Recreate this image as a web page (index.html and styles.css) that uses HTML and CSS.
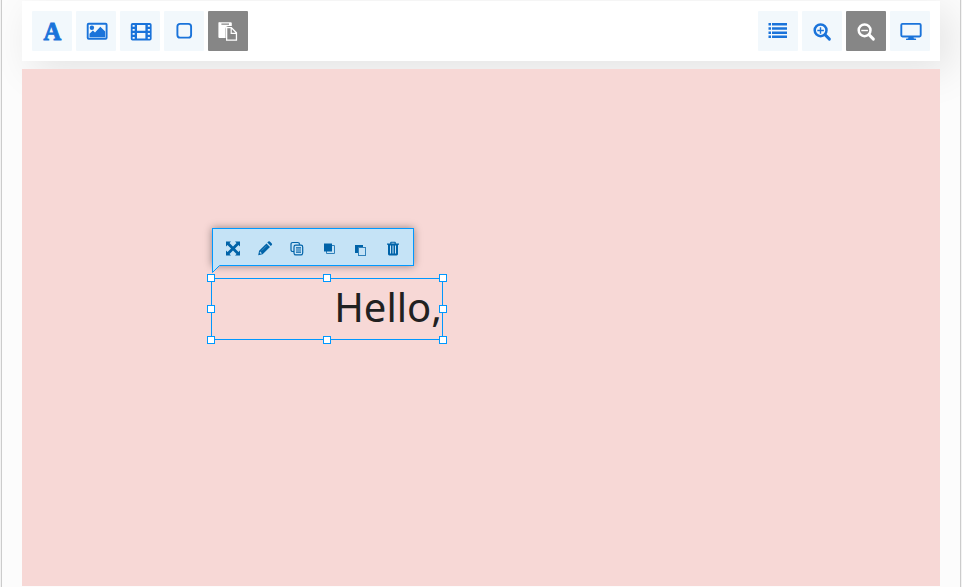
FILE: index.html
```
<!DOCTYPE html>
<html lang="en">
<head>
<meta charset="utf-8">
<title>Slide editor</title>
<link rel="stylesheet" href="styles.css">
</head>
<body>
<main class="editor">
  <header class="toolbar">
    <div class="group">
      <button class="tool" aria-label="Text"><svg viewBox="0 0 40 40"><text class="letter" x="20.4" y="28.700">A</text></svg></button>
      <button class="tool" aria-label="Image"><svg viewBox="0 0 40 40"><rect class="line" x="11.700" y="12.700" width="18.900" height="15" rx="1"/><circle cx="15.900" cy="16.700" r="2.200"/><path d="M13.500 26.200v-3.400l3.400-3.300 2.100 1.900 5.300-5.600 4.900 4.700v5.700z"/></svg></button>
      <button class="tool" aria-label="Video"><svg viewBox="0 0 40 40"><path fill-rule="evenodd" d="M12.500 12h17.300q1.800 0 1.800 1.700v14q0 1.800-1.800 1.800H12.500q-1.700 0-1.700-1.800v-14q0-1.700 1.700-1.700zM17 14v5.700h8.400V14zM17 21.900v5.700h8.400v-5.700zM12.600 14v1.700h2.100V14zM12.600 18v1.700h2.100V18zM12.600 22v1.700h2.100V22zM12.600 26v1.700h2.100V26zM27.800 14v1.700h2.100V14zM27.800 18v1.700h2.100V18zM27.800 22v1.700h2.100V22zM27.800 26v1.700h2.100V26z"/></svg></button>
      <button class="tool" aria-label="Shape"><svg viewBox="0 0 40 40"><rect class="line" x="13.400" y="12.900" width="13.700" height="13.700" rx="2.700"/></svg></button>
      <button class="tool off" aria-label="Paste"><svg viewBox="0 0 40 40"><path fill-rule="evenodd" d="M11.400 11.200h11.400q1 0 1 1v2.900h-3q-3.200 0-3.200 3v8.900h-6.200q-1 0-1-1v-14q0-1 1-1zM13.400 12.500v1.200h7.600v-1.200z"/><path fill-rule="evenodd" d="M18 16h5.600l5.500 5.500v8.300H18zM19.300 17.300v11.200h8.500v-5.400h-5.200v-5.800zM23.800 18v3.700h3.600z"/></svg></button>
    </div>
    <div class="group">
      <button class="tool" aria-label="List"><svg viewBox="0 0 40 40"><path d="M10.500 12h2.500v2.500h-2.500zM14 12h15v2.500H14zM10.500 16.200h2.500v2.500h-2.500zM14 16.200h15v2.500H14zM10.500 20.400h2.500v2.500h-2.500zM14 20.400h15v2.500H14zM10.500 24.600h2.500v2.500h-2.500zM14 24.600h15v2.500H14z"/></svg></button>
      <button class="tool" aria-label="Zoom in"><svg viewBox="0 0 40 40"><circle class="lens" cx="18.600" cy="19.300" r="5.900"/><path class="grip" d="M23.200 23.900l4.200 4.200"/><path class="sign" d="M15.300 19.500h6.600M18.500 16.200v6.600"/></svg></button>
      <button class="tool off" aria-label="Zoom out"><svg viewBox="0 0 40 40"><circle class="lens" cx="18.600" cy="19.300" r="5.900"/><path class="grip" d="M23.200 23.900l4.200 4.200"/><path class="sign" d="M15.300 19.500h6.600"/></svg></button>
      <button class="tool" aria-label="Present"><svg viewBox="0 0 40 40"><rect class="line" x="11.300" y="12.900" width="19.400" height="12.600" rx="1.200"/><path d="M18.500 26h5l.4 1.600h1.400q.8 0 .8.700v.6H16v-.6q0-.7.800-.7h1.300z"/></svg></button>
    </div>
  </header>
  <section class="canvas">
    <div class="selection">
      <p class="text">Hello,</p>
      <i class="handle top left"></i><i class="handle top mid"></i><i class="handle top right"></i>
      <i class="handle center left"></i><i class="handle center right"></i>
      <i class="handle bottom left"></i><i class="handle bottom mid"></i><i class="handle bottom right"></i>
      <div class="popup">
        <svg class="pointer" viewBox="0 0 9 9"><path class="fill" d="M.5 0v7.500L7.500 .5V0z"/><path class="edge" d="M.5 0v7.500L7.500 .5"/></svg>
        <svg class="action" viewBox="0 0 16 16"><path d="M1 1.500h5L4.500 3 8 6.500 11.500 3 10 1.500h5v5L13.500 5 10 8.500l3.500 3.500 1.500-1.500v5h-5l1.500-1.500L8 10.500 4.500 14 6 15.500H1v-5L2.500 12 6 8.500 2.500 5 1 6.500z"/></svg>
        <svg class="action" viewBox="0 0 16 16"><path fill-rule="evenodd" d="M1.200 15.200l.9-4.400 7.400-7.400 3.500 3.500-7.400 7.400zM2.900 11.700l-.2 1.200.8.800 1.200-.2v-.8h-.9v-1zM10.300 2.600l1-1q.8-.7 1.600 0l1.900 1.900q.7.800 0 1.600l-1 1z"/><path class="glint" d="M4.700 10.600l5-5"/></svg>
        <svg class="action" viewBox="0 0 16 16"><path class="thin" d="M5 11.500H3.800q-1.800 0-1.800-1.800V4.300q0-1.800 1.800-1.800h4.900q1.800 0 1.800 1.800v.5"/><rect class="thin" x="5" y="5.200" width="8.700" height="9.700" rx="1.800"/><path class="thin" d="M7 7.800h5M7 10h5M7 12.200h5"/></svg>
        <svg class="action" viewBox="0 0 16 16"><path class="soft" d="M11 5.500h2.500v8h-8V11"/><path d="M3 3.500h8v8H3z"/></svg>
        <svg class="action" viewBox="0 0 16 16"><path d="M2 5h8v2.300H5V13H2z"/><rect class="soft" x="5.500" y="7.500" width="7" height="8"/></svg>
        <svg class="action" viewBox="0 0 16 16"><path fill-rule="evenodd" d="M5.200 3.500v-1q0-.8.900-.8h3.900q.8 0 .8.800v1H14v1.200h-1V14q0 1.400-1.300 1.400H4.300Q3 15.400 3 14V4.700H2V3.500zM6.400 3.500h3.200v-.8H6.400zM5 5.500v8h1v-8zM7.500 5.500v8h1v-8zM10 5.500v8h1v-8z"/></svg>
      </div>
    </div>
  </section>
</main>
</body>
</html>
```
FILE: styles.css
```
* { box-sizing: border-box; }
body {
  margin: 0;
  height: 587px;
  overflow: hidden;
  background: #f3f3f3;
}
.editor {
  display: flex;
  flex-direction: column;
  gap: 8px;
  height: 587px;
  margin: 0 1px;
  padding: 1px 20px;
  overflow: hidden;
  border: solid #ccc;
  border-width: 0 1px;
  background: #fcfcfc;
}
.toolbar {
  display: flex;
  justify-content: space-between;
  flex: none;
  height: 60px;
  padding: 10px;
  background: #fff;
  box-shadow: 10px 10px 40px rgba(0, 0, 0, .1);
}
.group { display: flex; gap: 4px; }
.tool {
  width: 40px;
  height: 40px;
  padding: 0;
  border: 0;
  border-radius: 1px;
  background: #f2f8fc;
  color: #1a73da;
}
.tool.off { background: #868686; color: #fff; }
.tool svg { display: block; fill: currentColor; }
.tool .line { fill: none; stroke: currentColor; stroke-width: 1.900; }
.letter {
  font: bold 24.500px "Liberation Serif", serif;
  text-anchor: middle;
  stroke: currentColor;
  stroke-width: .9;
}
.tool .lens { fill: none; stroke: currentColor; stroke-width: 2.500; }
.grip { stroke: currentColor; stroke-width: 2.900; stroke-linecap: round; }
.sign { stroke: currentColor; stroke-width: 1.400; }
.canvas {
  flex: 1;
  position: relative;
  background: #f7d8d6;
}
.selection {
  position: absolute;
  left: 189px;
  top: 209px;
  width: 232px;
  height: 62px;
  border: 1px solid #0098ff;
}
.text {
  margin: 0;
  color: #212121;
  font: 40px/56px "Noto Sans", sans-serif;
  text-align: right;
}
.handle {
  position: absolute;
  width: 8px;
  height: 8px;
  border: 1px solid #0098ff;
  background: #fff;
}
.top { top: -5px; }
.center { top: 26px; }
.bottom { bottom: -5px; }
.left { left: -5px; }
.mid { left: 111px; }
.right { right: -5px; }
.popup {
  position: absolute;
  left: 0;
  top: -51px;
  display: flex;
  align-items: center;
  gap: 16px;
  width: 202px;
  height: 38px;
  padding: 1px 12px 0;
  border: 1px solid #0098ff;
  background: #c5e3f6;
  box-shadow: 0 0 8px rgba(0, 0, 0, .4);
}
.action { flex: none; width: 16px; height: 16px; fill: #0063a8; }
.thin { fill: none; stroke: #0063a8; stroke-width: 1.200; }
.soft { fill: none; stroke: #2f80ba; stroke-width: 1; }
.glint { stroke: #6fa9d2; stroke-width: .6; }
.pointer {
  position: absolute;
  left: -1px;
  top: 36px;
  width: 9px;
  height: 9px;
}
.pointer .fill { fill: #c5e3f6; }
.pointer .edge { fill: none; stroke: #0098ff; }
```
